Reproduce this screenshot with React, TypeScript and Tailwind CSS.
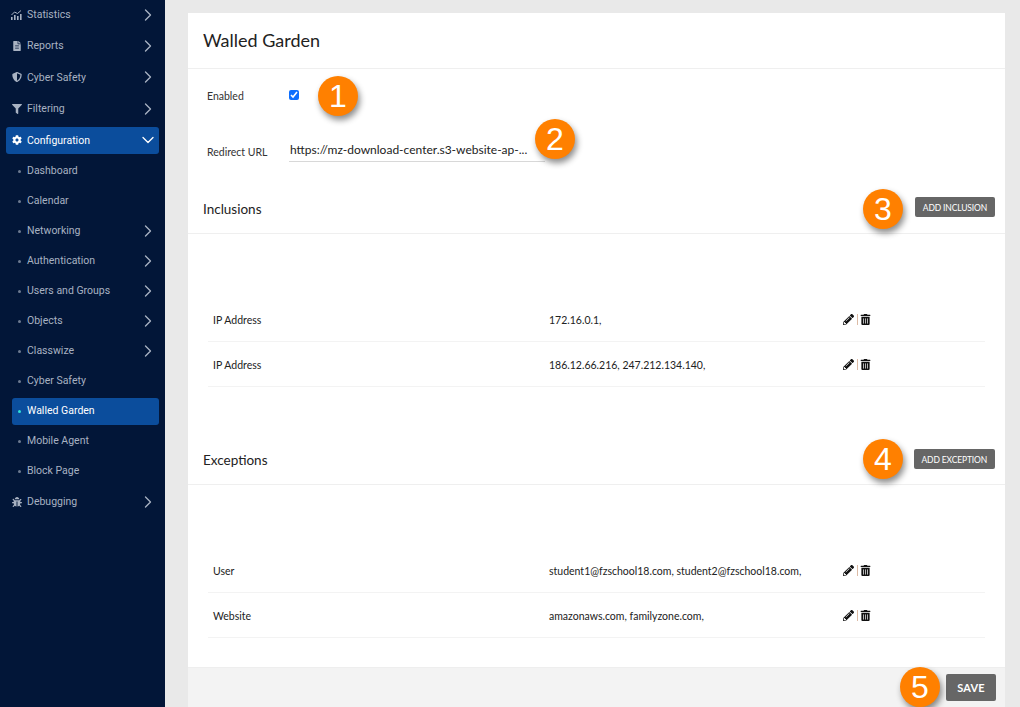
import React from "react";
import { FaFileAlt, FaShieldAlt, FaFilter, FaCog, FaBug, FaPencilAlt, FaTrashAlt } from "react-icons/fa";
import { ChevronRight, ChevronDown } from "lucide-react";

const StatsIcon = () => (
  <svg width="11" height="10" viewBox="0 0 11 10" fill="currentColor">
    <rect x="0" y="7" width="1.6" height="3" />
    <rect x="3" y="5" width="1.6" height="5" />
    <rect x="6" y="6" width="1.6" height="4" />
    <rect x="9" y="4" width="1.6" height="6" />
    <path d="M0.5 5 L3.5 2 L6.5 3.5 L10 0.5" fill="none" stroke="currentColor" strokeWidth="1" />
  </svg>
);

const Top = ({ icon, label, active, h, nudge }: { icon: React.ReactNode; label: string; active?: boolean; h: string; nudge?: boolean }) => (
  <div className={`${h} flex items-center`}>
    <div className={`w-[153px] ml-[6px] h-[27px] rounded-[3px] flex items-center pl-[5px] pr-[1px] ${active ? "bg-[#0b4d9c] text-white" : "text-[#a8b2c2]"}`}>
      <span className="w-[11px] flex justify-center text-[10px]">{icon}</span>
      <span className={`ml-[5px] text-[10.5px] flex-1 font-['Roboto',sans-serif] ${nudge ? "pt-[2px]" : ""}`}>{label}</span>
      {active ? <ChevronDown size={20} strokeWidth={1.6} /> : <ChevronRight size={20} strokeWidth={1.6} />}
    </div>
  </div>
);

const Sub = ({ label, arrow, active }: { label: string; arrow?: boolean; active?: boolean }) => (
  <div className="h-[30px] flex items-center">
    <div className={`w-[147px] ml-[12px] h-[27px] rounded-[3px] flex items-center pl-[6px] pr-[1px] ${active ? "bg-[#0b4d9c] text-white" : "text-[#a8b2c2]"}`}>
      <span className={`w-[3px] h-[3px] rounded-full ${active ? "bg-[#2fe0d8]" : "bg-[#6d7a90]"}`} />
      <span className="ml-[6px] text-[10.5px] flex-1 font-['Roboto',sans-serif]">{label}</span>
      {arrow && <ChevronRight size={20} strokeWidth={1.6} />}
    </div>
  </div>
);

const Badge = ({ n, className }: { n: number; className: string }) => (
  <div className={`absolute w-10 h-10 rounded-full bg-[#ff8000] text-white flex items-center justify-center text-[32px] leading-none font-['Liberation_Sans',sans-serif] shadow-[2px_4px_6px_rgba(0,0,0,0.45)] ${className}`}>
    {n}
  </div>
);

const Row = ({ a, b }: { a: string; b: string }) => (
  <div className="h-[45px] flex items-center border-b border-[#f3f3f3] text-[10.5px] text-[#222]">
    <span className="w-[341px] pl-[5px] pt-[4px]">{a}</span>
    <span className="w-[294px] pt-[4px]">{b}</span>
    <span className="flex items-center text-[#111] text-[11px]">
      <FaPencilAlt />
      <span className="w-px h-[11px] bg-[#dcbba5] ml-[3px] mr-[2px]" />
      <FaTrashAlt />
    </span>
  </div>
);

const Section = ({ title, btn, btnClass, rows }: { title: string; btn: string; btnClass: string; rows: [string, string][] }) => (
  <section>
    <div className="h-[50px] flex items-center justify-between border-b border-[#efefef] pl-[15px] pr-[10px]">
      <h2 className="text-[13.5px] text-[#222] pt-[2px]">{title}</h2>
      <button className={`h-[20px] px-[8px] pt-[4px] rounded-[2px] bg-[#666] text-white text-[8.5px] tracking-[-0.15px] ${btnClass}`}>{btn}</button>
    </div>
    <div className="pt-[63px] pl-[20px] pr-[20px]">
      {rows.map((r) => (
        <Row key={r[0]} a={r[0]} b={r[1]} />
      ))}
    </div>
  </section>
);

export default function App() {
  return (
    <div className="relative w-[1020px] h-[707px] overflow-hidden flex bg-[#e9e9e9] font-['Lato',sans-serif]">
      <aside className="w-[165px] shrink-0 bg-[#021638] -mt-[1px] h-[708px]">
        <Top h="h-[31px]" icon={<StatsIcon />} label="Statistics" />
        <Top h="h-[31px]" icon={<FaFileAlt />} label="Reports" />
        <Top h="h-[32px]" icon={<FaShieldAlt />} label="Cyber Safety" nudge />
        <Top h="h-[31px]" icon={<FaFilter />} label="Filtering" />
        <Top h="h-[32px]" icon={<FaCog />} label="Configuration" active nudge />
        <Sub label="Dashboard" />
        <Sub label="Calendar" />
        <Sub label="Networking" arrow />
        <Sub label="Authentication" arrow />
        <Sub label="Users and Groups" arrow />
        <Sub label="Objects" arrow />
        <Sub label="Classwize" arrow />
        <Sub label="Cyber Safety" />
        <Sub label="Walled Garden" active />
        <Sub label="Mobile Agent" />
        <Sub label="Block Page" />
        <Top h="h-[32px]" icon={<FaBug />} label="Debugging" />
      </aside>
      <main className="ml-[23px] mt-[13px] w-[817px] h-[694px] bg-white flex flex-col">
        <header className="h-[56px] flex items-center pl-[15px] border-b border-[#efefef]">
          <h1 className="text-[18px] text-[#222]">Walled Garden</h1>
        </header>
        <div className="h-[55px] flex items-center text-[10.5px] text-[#333] pl-[19px]">
          <span className="w-[82px]">Enabled</span>
          <input type="checkbox" defaultChecked className="w-[10px] h-[10px] -mt-[3px] accent-[#0d6efd]" />
        </div>
        <div className="h-[11px]" />
        <div className="h-[27px] flex items-center text-[10.5px] text-[#333] pl-[19px]">
          <span className="w-[82px] mt-[9px]">Redirect URL</span>
          <div className="w-[256px] h-[27px] border-b border-[#d8d8d8] flex items-center pt-[4px] pl-[1px] text-[12px] text-[#222]">
            https://mz-download-center.s3-website-ap-...
          </div>
        </div>
        <div className="h-[22px]" />
        <Section title="Inclusions" btn="ADD INCLUSION" btnClass="mb-[4px]" rows={[["IP Address", "172.16.0.1,"], ["IP Address", "186.12.66.216, 247.212.134.140,"]]} />
        <div className="h-[48px]" />
        <Section title="Exceptions" btn="ADD EXCEPTION" btnClass="mb-[2px]" rows={[["User", "student1@fzschool18.com, student2@fzschool18.com,"], ["Website", "amazonaws.com, familyzone.com,"]]} />
        <div className="flex-1" />
        <footer className="h-[40px] bg-[#f3f3f3] flex items-center justify-end pr-[9px] border-t border-[#eee]">
          <button className="w-[50px] h-[27px] rounded-[2px] bg-[#666] text-white text-[11px] font-bold tracking-[0.2px] pt-[1px]">SAVE</button>
        </footer>
      </main>
      <Badge n={1} className="left-[318px] top-[76px]" />
      <Badge n={2} className="left-[535px] top-[119px]" />
      <Badge n={3} className="left-[863px] top-[189px]" />
      <Badge n={4} className="left-[863px] top-[439px]" />
      <Badge n={5} className="left-[900px] top-[667px]" />
    </div>
  );
}
